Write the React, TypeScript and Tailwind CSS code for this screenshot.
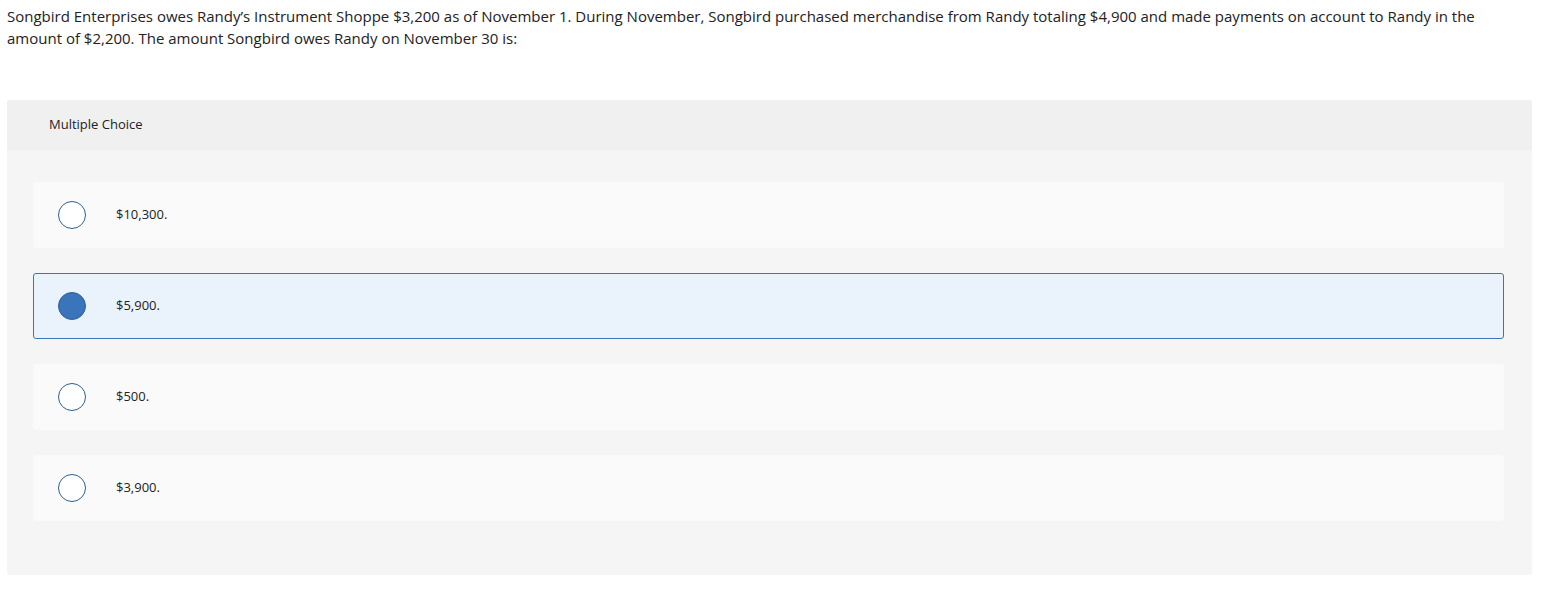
const options = [
  { id: 'a', label: '$10,300.' },
  { id: 'b', label: '$5,900.' },
  { id: 'c', label: '$500.' },
  { id: 'd', label: '$3,900.' },
];

const App = () => {
  const selected = 'b';

  return (
    <div className="w-[1558px] h-[590px] bg-white text-[#222] font-['Open_Sans',sans-serif]">
      {/* 题干 */}
      <div className="pl-[7px] w-[1500px] pt-[5px] text-[15px] leading-[22px]">
        Songbird Enterprises owes Randy’s Instrument Shoppe $3,200 as of November 1. During November, Songbird purchased merchandise from Randy totaling $4,900 and made payments on account to Randy in the amount of $2,200. The amount Songbird owes Randy on November 30 is:
      </div>
      <div className="mt-[51px] ml-[7px] w-[1525px] rounded-[3px] bg-[#f5f5f5] overflow-hidden">
        <div className="h-[50px] bg-[#f0f0f0] flex items-center pl-[42px] text-[13px]">
          Multiple Choice
        </div>
        <div className="flex flex-col gap-[25px] pt-[32px] pb-[54px] pl-[26px] pr-[28px]">
          {options.map((opt) => {
            const isOn = opt.id === selected;
            return (
              <div
                key={opt.id}
                className={`h-[66px] rounded-[3px] flex items-center ${isOn ? 'bg-[#eaf2fb] border border-[#3a75bb]' : 'bg-[#fafafa] border border-transparent'}`}
              >
                <div className="w-[76px] flex justify-center">
                  <div
                    className={`w-[28px] h-[28px] rounded-full border-[1.5px] border-[#2f5f91] ${isOn ? 'bg-[#3a75bb]' : 'bg-white'}`}
                  />
                </div>
                <div className="ml-[6px] text-[13px]">{opt.label}</div>
              </div>
            );
          })}
        </div>
      </div>
    </div>
  );
};

export default App;
